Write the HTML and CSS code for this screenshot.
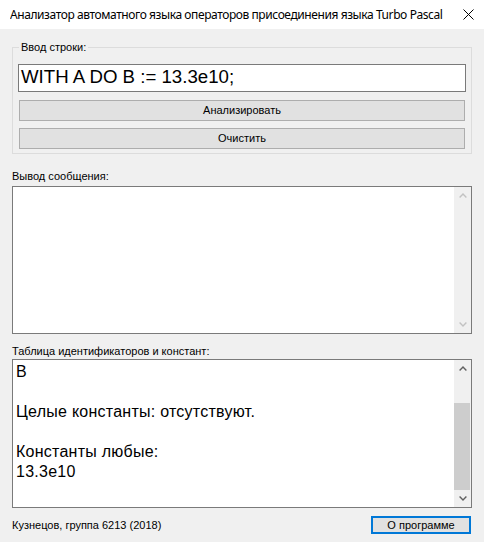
FILE: index.html
```html
<!DOCTYPE html>
<html lang="ru">
<head>
<meta charset="utf-8">
<title>Анализатор</title>
<link rel="stylesheet" href="styles.css">
</head>
<body>
<div class="window">
  <div class="titlebar">
    <span class="title">Анализатор автоматного языка операторов присоединения языка Turbo Pascal</span>
    <svg class="close" width="11" height="11" viewBox="0 0 11 11"><path d="M0.5 0.5 L10.5 10.5 M10.5 0.5 L0.5 10.5" stroke="#000" stroke-width="1" fill="none"/></svg>
  </div>
  <div class="client">
    <div class="group">
      <div class="group-label">Ввод строки:</div>
      <div class="input">WITH A DO B := 13.3e10;</div>
      <div class="btn btn-first">Анализировать</div>
      <div class="btn btn-second">Очистить</div>
    </div>

    <div class="label label-out">Вывод сообщения:</div>
    <div class="textbox out">
      <div class="tb-content"></div>
      <div class="scrollbar">
        <div class="sb-btn"><svg width="8" height="5" viewBox="0 0 8 5"><polyline points="0.6,4.4 4,1 7.4,4.4" fill="none" stroke="#c2c2c2" stroke-width="1.4"/></svg></div>
        <div class="sb-track"></div>
        <div class="sb-btn"><svg width="8" height="5" viewBox="0 0 8 5"><polyline points="0.6,0.6 4,4 7.4,0.6" fill="none" stroke="#c2c2c2" stroke-width="1.4"/></svg></div>
      </div>
    </div>

    <div class="label label-table">Таблица идентификаторов и констант:</div>
    <div class="textbox table">
      <div class="tb-content">
        <div class="line">B</div>
        <div class="line">&nbsp;</div>
        <div class="line">Целые константы: отсутствуют.</div>
        <div class="line">&nbsp;</div>
        <div class="line">Константы любые:</div>
        <div class="line">13.3e10</div>
      </div>
      <div class="scrollbar">
        <div class="sb-btn"><svg width="8" height="5" viewBox="0 0 8 5"><polyline points="0.6,4.4 4,1 7.4,4.4" fill="none" stroke="#606060" stroke-width="1.4"/></svg></div>
        <div class="sb-track"><div class="sb-thumb"></div></div>
        <div class="sb-btn"><svg width="8" height="5" viewBox="0 0 8 5"><polyline points="0.6,0.6 4,4 7.4,0.6" fill="none" stroke="#606060" stroke-width="1.4"/></svg></div>
      </div>
    </div>

    <div class="footer">
      <span class="author">Кузнецов, группа 6213 (2018)</span>
      <div class="btn about">О программе</div>
    </div>
  </div>
</div>
</body>
</html>
```

FILE: styles.css
```css
* { box-sizing: border-box; }
html, body { margin: 0; padding: 0; background: #f0f0f0; }
body {
  font-family: "Liberation Sans", Arial, sans-serif;
  font-size: 11px;
  color: #000;
}
.window {
  width: 484px;
  height: 542px;
  overflow: hidden;
  background: #f0f0f0;
}
.titlebar {
  height: 29px;
  background: #fff;
  display: flex;
  align-items: center;
  padding: 0 10px 0 10px;
}
.title {
  flex: 1;
  min-width: 0;
  overflow: hidden;
  font-family: "Noto Sans", sans-serif;
  font-size: 12px;
  letter-spacing: -0.42px;
  white-space: nowrap;
}
.close { display: block; flex: none; }

.client { padding: 0 12px; }

.group {
  margin-top: 18px;
  border: 1px solid #dcdcdc;
  padding: 0 5px 4px 5px;
}
.group-label {
  margin: -7px 0 0 1px;
  padding: 0 2px;
  width: fit-content;
  background: #f0f0f0;
  line-height: 13px;
}
.input {
  margin-top: 10px;
  height: 28px;
  border: 1px solid #7a7a7a;
  background: #fff;
  font-size: 18.67px;
  line-height: 24px;
  padding-left: 2px;
  white-space: nowrap;
}
.btn {
  height: 21px;
  margin: 0 1px;
  background: #e1e1e1;
  border: 1px solid #adadad;
  text-align: center;
  line-height: 19px;
}
.btn-first { margin-top: 8px; }
.btn-second { margin-top: 7px; }

.label { line-height: 13px; }
.label-out { margin-top: 16px; }
.label-table { margin-top: 11px; }

.textbox {
  margin-top: 3px;
  border: 1px solid #7a7a7a;
  background: #fff;
  display: flex;
}
.textbox.out { height: 148px; }
.textbox.table { margin-top: 1px; height: 149px; }
.tb-content {
  flex: 1;
  padding: 2px 3px;
  font-size: 16px;
  line-height: 20px;
  letter-spacing: 0.25px;
  overflow: hidden;
}
.scrollbar {
  width: 17px;
  background: #f0f0f0;
  display: flex;
  flex-direction: column;
}
.sb-btn {
  height: 17px;
  display: flex;
  align-items: center;
  justify-content: center;
}
.sb-track {
  flex: 1;
  display: flex;
  flex-direction: column;
  justify-content: flex-end;
}
.sb-thumb {
  height: 87px;
  margin: 0 1px 0 0;
  background: #cdcdcd;
}

.footer {
  margin-top: 8px;
  display: flex;
  align-items: center;
  justify-content: space-between;
}
.author { line-height: 13px; }
.btn.about {
  width: 100px;
  height: 18px;
  margin: 0 1px 0 0;
  border: 2px solid #0078d7;
  line-height: 14px;
}
```
